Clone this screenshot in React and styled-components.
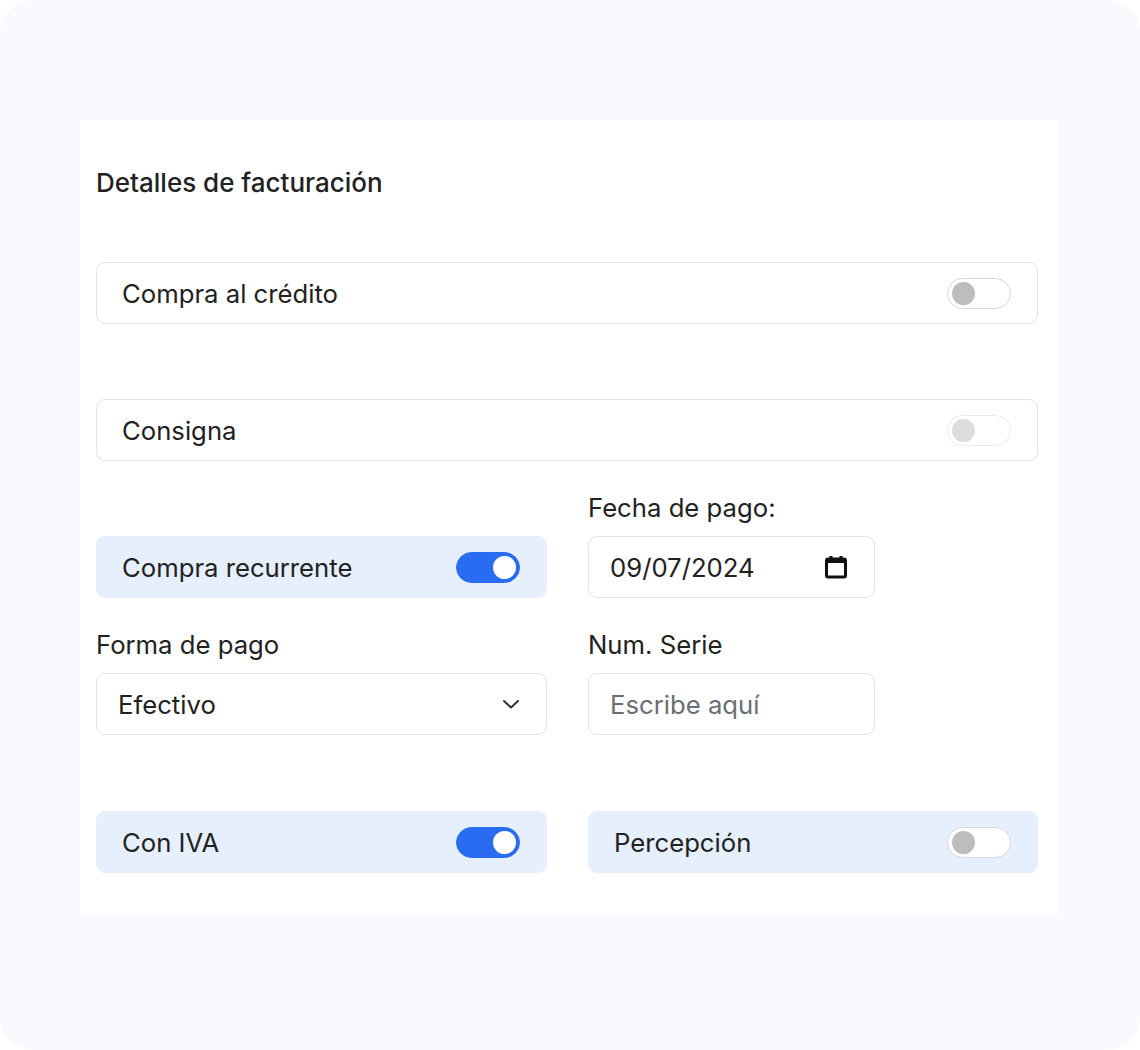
import React from "react";
import styled, { createGlobalStyle } from "styled-components";

const GlobalStyle = createGlobalStyle`
  body {
    margin: 0;
    background: #ffffff;
    font-family: Inter, "Liberation Sans", sans-serif;
    color: #212529;
  }
`;

const Frame = styled.div`
  height: 1050px;
  box-sizing: border-box;
  background: #f9f9fe;
  border-radius: 34px;
  padding: 120px 82px 0 80px;
`;

const Card = styled.div`
  background: #ffffff;
  padding: 48px 20px 42px 16px;
  display: flex;
  flex-direction: column;
`;

const Title = styled.h2`
  margin: 0;
  font-size: 26px;
  line-height: 30px;
  font-weight: 500;
  color: #222;
`;

const SwitchRow = styled.div`
  height: 62px;
  box-sizing: border-box;
  display: flex;
  align-items: center;
  justify-content: space-between;
  padding: 0 26px 0 25px;
  border-radius: 9px;
  margin-top: ${(p) => p.$top || 0}px;
  background: ${(p) => (p.$tinted ? "#e5effd" : "#ffffff")};
  border: 1px solid ${(p) => (p.$tinted ? "#e5effd" : "#e3e3e3")};
  font-size: 25.7px;
  color: #222;
`;

const Track = styled.span`
  position: relative;
  width: 64px;
  height: 31px;
  box-sizing: border-box;
  border-radius: 16px;
  background: ${(p) => (p.$on ? "#2a6cf1" : "#ffffff")};
  border: 1px solid ${(p) => (p.$on ? "#2a6cf1" : "#d9d9d9")};
  opacity: ${(p) => (p.$disabled ? 0.5 : 1)};

  &::after {
    content: "";
    position: absolute;
    top: 3px;
    left: ${(p) => (p.$on ? "36px" : "4px")};
    width: 23px;
    height: 23px;
    border-radius: 50%;
    background: ${(p) => (p.$on ? "#ffffff" : "#bdbdbd")};
  }
`;

const Grid = styled.div`
  display: grid;
  grid-template-columns: 451px 450px;
  column-gap: 41px;
  row-gap: 32px;
  margin-top: ${(p) => p.$top || 0}px;
  align-items: end;
`;

const Field = styled.div`
  display: flex;
  flex-direction: column;
  gap: 13px;
`;

const Label = styled.label`
  font-size: 25.7px;
  line-height: 30px;
  color: #222;
`;

const Box = styled.div`
  width: ${(p) => p.$width || "100%"};
  height: 62px;
  box-sizing: border-box;
  display: flex;
  align-items: center;
  justify-content: space-between;
  padding: 0 26px 0 21px;
  border: 1px solid #e3e3e3;
  border-radius: 9px;
  background: #fff;
  font-size: 25.7px;
  color: #222;
`;

const TextInput = styled.input`
  width: 287px;
  height: 62px;
  box-sizing: border-box;
  padding: 0 21px;
  border: 1px solid #e3e3e3;
  border-radius: 9px;
  font-family: inherit;
  font-size: 25.7px;
  color: #222;
  outline: none;

  &::placeholder {
    color: #6b6e72;
  }
`;

const Calendar = () => (
  <svg width="24" height="26" viewBox="0 0 24 26" fill="none">
    <rect x="2.5" y="5" width="19" height="18" rx="1.5" stroke="#111" strokeWidth="3" />
    <rect x="2.5" y="5" width="19" height="4" fill="#111" />
    <rect x="5.5" y="2" width="3" height="4" fill="#111" />
    <rect x="15.5" y="2" width="3" height="4" fill="#111" />
  </svg>
);

const Chevron = () => (
  <svg width="18" height="12" viewBox="0 0 18 12" fill="none">
    <path d="M2 3l7 6.5L16 3" stroke="#333" strokeWidth="2" strokeLinecap="round" strokeLinejoin="round" />
  </svg>
);

function App() {
  return (
    <>
      <GlobalStyle />
      <Frame>
        <Card>
          <Title>Detalles de facturación</Title>
          <SwitchRow $top={64}>
            Compra al crédito
            <Track />
          </SwitchRow>
          <SwitchRow $top={75}>
            Consigna
            <Track $disabled />
          </SwitchRow>
          <Grid $top={32}>
            <SwitchRow $tinted>
              Compra recurrente
              <Track $on />
            </SwitchRow>
            <Field>
              <Label>Fecha de pago:</Label>
              <Box $width="287px">
                09/07/2024
                <Calendar />
              </Box>
            </Field>
            <Field>
              <Label>Forma de pago</Label>
              <Box>
                Efectivo
                <Chevron />
              </Box>
            </Field>
            <Field>
              <Label>Num. Serie</Label>
              <TextInput placeholder="Escribe aquí" />
            </Field>
          </Grid>
          <Grid $top={76}>
            <SwitchRow $tinted>
              Con IVA
              <Track $on />
            </SwitchRow>
            <SwitchRow $tinted>
              Percepción
              <Track />
            </SwitchRow>
          </Grid>
        </Card>
      </Frame>
    </>
  );
}

export default App;
